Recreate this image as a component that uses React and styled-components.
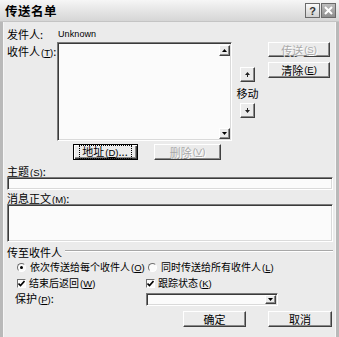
import React from 'react';
import styled, { createGlobalStyle, css } from 'styled-components';

const Global = createGlobalStyle`
  html, body { margin: 0; padding: 0; background: #ebebeb; }
  body {
    font-family: "Noto Sans CJK SC", "Liberation Sans", sans-serif;
    font-size: 11px;
    color: #000;
  }
  #root { width: 339px; height: 337px; }
`;

const raised = css`
  border: 1px solid;
  border-color: #fff #404040 #404040 #fff;
  box-shadow: inset -1px -1px 0 #8a8a8a;
  background: #ebebeb;
`;

const sunken = css`
  border: 1px solid;
  border-color: #7a7a7a #fff #fff #7a7a7a;
  box-shadow: inset 1px 1px 0 #3a3a3a, inset -1px -1px 0 #dadada;
  background: #fbfbfb;
`;

const Window = styled.div`
  width: 339px;
  height: 337px;
  display: flex;
  flex-direction: column;
  overflow: hidden;
  background: #ebebeb;
`;

const TitleBar = styled.div`
  height: 22px;
  flex: none;
  display: flex;
  align-items: center;
  padding: 0 3px 0 5px;
  background: linear-gradient(#f6f6f6, #e2e2e2 60%, #d6d6d6);
  border-bottom: 1px solid #c4c4c4;
  box-sizing: border-box;
`;

const Title = styled.div`
  flex: 1;
  font-weight: bold;
  font-size: 12.5px;
  line-height: 14px;
  letter-spacing: 0.5px;
`;

const CapButton = styled.div`
  width: 15px;
  height: 15px;
  margin-left: 1px;
  box-sizing: border-box;
  display: flex;
  align-items: center;
  justify-content: center;
  font-family: "Liberation Sans", sans-serif;
  font-weight: bold;
  font-size: 11px;
  border: 1px solid #6a6a6a;
  background: ${p => (p.$dark ? 'linear-gradient(#bdbdbd,#8e8e8e)' : 'linear-gradient(#fafafa,#d0d0d0)')};
  color: ${p => (p.$dark ? '#fff' : '#333')};
`;

const Frame = styled.div`
  flex: 1;
  border-left: 3px solid #b9b9b9;
  border-right: 3px solid #b9b9b9;
  box-shadow: inset 1px 0 0 #f6f6f6, inset -1px 0 0 #f6f6f6;
  padding: 6px 3px 0 4px;
  display: flex;
  flex-direction: column;
`;

const Text = styled.div`
  line-height: 12px;
  height: 12px;
  white-space: nowrap;
  color: ${p => (p.$disabled ? '#a8a8a8' : '#000')};
  text-shadow: ${p => (p.$disabled ? '1px 1px 0 #fff' : 'none')};
`;

const SenderRow = styled.div`
  display: grid;
  grid-template-columns: 51px 1fr;
  height: 12px;
  line-height: 12px;
`;

const Latin = styled.span`
  font-family: "Liberation Sans", sans-serif;
  font-size: 9px;
  letter-spacing: 0.1px;
`;

const KeyWrap = styled.span`
  font-family: "Liberation Sans", sans-serif;
  font-size: 9.5px;
  margin-left: 1px;
`;

const MainGrid = styled.div`
  margin-top: 2px;
  display: grid;
  grid-template-columns: 50px 175px 8px 15px 13px 62px;
  height: 99px;
`;

const LabelCell = styled.div`
  padding-top: 3px;
`;

const ListBox = styled.div`
  ${sunken};
  box-sizing: border-box;
  display: flex;
  justify-content: flex-end;
  padding: 2px 1px 1px 2px;
`;

const MiniScroll = styled.div`
  width: 11px;
  display: flex;
  flex-direction: column;
  justify-content: space-between;
`;

const ScrollArrow = styled.div`
  ${raised};
  box-sizing: border-box;
  height: 11px;
  display: flex;
  align-items: center;
  justify-content: center;
`;

const MoveCol = styled.div`
  grid-column: 4;
  display: flex;
  flex-direction: column;
  align-items: center;
  padding-top: 25px;
`;

const SmallBtn = styled.div`
  ${raised};
  box-sizing: border-box;
  width: 15px;
  height: 15px;
  display: flex;
  align-items: center;
  justify-content: center;
`;

const MoveLabel = styled(Text)`
  margin: 5px 0 4px;
  width: 24px;
  text-align: center;
`;

const BtnCol = styled.div`
  grid-column: 6;
  display: flex;
  flex-direction: column;
  gap: 5px;
`;

const Button = styled.div`
  ${raised};
  box-sizing: border-box;
  width: ${p => p.$w || 62}px;
  height: ${p => p.$h || 16}px;
  display: flex;
  align-items: center;
  justify-content: center;
  line-height: 12px;
  white-space: nowrap;
  color: ${p => (p.$disabled ? '#a8a8a8' : '#000')};
  text-shadow: ${p => (p.$disabled ? '1px 1px 0 #fff' : 'none')};
  ${p =>
    p.$focus &&
    css`
      border-color: #000;
      box-shadow: inset 1px 1px 0 #fff, inset -1px -1px 0 #404040, inset -2px -2px 0 #8a8a8a;
    `}
`;

const FocusRing = styled.span`
  border: 1px dotted #000;
  padding: 0 3px 0 2px;
  line-height: 10px;
`;

const AddrRow = styled.div`
  margin-top: 3px;
  padding-left: 66px;
  display: flex;
  gap: 16px;
`;

const FieldLabel = styled(Text)`
  margin-top: ${p => p.$mt || 0}px;
`;

const Input = styled.div`
  ${sunken};
  box-sizing: border-box;
  width: 326px;
  height: ${p => p.$h}px;
  background: #fbfbfb;
`;

const GroupHead = styled.div`
  margin-top: 4px;
  display: flex;
  align-items: center;
  gap: 3px;
  height: 12px;
  line-height: 12px;
  &::after {
    content: '';
    flex: 1;
    border-top: 1px solid #a8a8a8;
    border-bottom: 1px solid #fff;
    margin-top: -2px;
  }
`;

const OptRow = styled.div`
  margin-top: ${p => p.$mt}px;
  display: grid;
  grid-template-columns: 139px 1fr;
  height: ${p => p.$h || 12}px;
  align-items: center;
`;

const Opt = styled.div`
  display: flex;
  align-items: center;
  gap: 3px;
  padding-left: ${p => p.$pl || 0}px;
  line-height: 12px;
  white-space: nowrap;
  font-size: ${p => p.$fs || 10}px;
`;

const Radio = styled.span`
  width: 7px;
  height: 7px;
  border-radius: 50%;
  border: 1px solid;
  border-color: #707070 #fff #fff #707070;
  background: #fbfbfb;
  display: inline-flex;
  align-items: center;
  justify-content: center;
  flex: none;
  margin-right: 1px;
  &::after {
    content: '';
    width: 3px;
    height: 3px;
    border-radius: 50%;
    background: ${p => (p.$on ? '#000' : 'transparent')};
  }
`;

const Check = styled.span`
  width: 9px;
  height: 9px;
  box-sizing: border-box;
  border: 1px solid;
  border-color: #707070 #fff #fff #707070;
  background: #fbfbfb;
  display: inline-flex;
  align-items: center;
  justify-content: center;
  flex: none;
`;

const Select = styled.div`
  ${sunken};
  box-sizing: border-box;
  width: 132px;
  height: 13px;
  display: flex;
  justify-content: flex-end;
  padding: 1px;
`;

const DropBtn = styled.div`
  ${raised};
  box-sizing: border-box;
  width: 11px;
  height: 100%;
  display: flex;
  align-items: center;
  justify-content: center;
`;

const FooterRow = styled.div`
  margin-top: 6px;
  display: flex;
  padding-left: 176px;
  gap: 22px;
`;

const Key = ({ k }) => (
  <KeyWrap>
    (<u>{k}</u>)
  </KeyWrap>
);

const Tri = ({ up }) => (
  <svg width="5" height="3" viewBox="0 0 5 3">
    <path d={up ? 'M2.5 0 L5 3 L0 3 Z' : 'M0 0 L5 0 L2.5 3 Z'} fill="#000" />
  </svg>
);

const Arrow = ({ up }) => (
  <svg width="5" height="5" viewBox="0 0 5 5">
    {up ? (
      <path d="M2.5 0 L5 3 L3 3 L3 5 L2 5 L2 3 L0 3 Z" fill="#222" />
    ) : (
      <path d="M2 0 L3 0 L3 2 L5 2 L2.5 5 L0 2 L2 2 Z" fill="#222" />
    )}
  </svg>
);

const Tick = () => (
  <svg width="7" height="7" viewBox="0 0 7 7">
    <path d="M0.5 3.5 L2.5 5.5 L6.5 1" stroke="#000" strokeWidth="1.6" fill="none" />
  </svg>
);

export default function App() {
  return (
    <>
      <Global />
      <Window>
        <TitleBar>
          <Title>传送名单</Title>
          <CapButton>?</CapButton>
          <CapButton $dark>
            <svg width="9" height="9" viewBox="0 0 9 9">
              <path d="M1 1 L8 8 M8 1 L1 8" stroke="#fff" strokeWidth="2" />
            </svg>
          </CapButton>
        </TitleBar>
        <Frame>
          <SenderRow>
            <span>发件人:</span>
            <Latin>Unknown</Latin>
          </SenderRow>
          <MainGrid>
            <LabelCell>
              <Text>
                收件人<Key k="T" />:
              </Text>
            </LabelCell>
            <ListBox>
              <MiniScroll>
                <ScrollArrow>
                  <Tri up />
                </ScrollArrow>
                <ScrollArrow>
                  <Tri />
                </ScrollArrow>
              </MiniScroll>
            </ListBox>
            <MoveCol>
              <SmallBtn>
                <Arrow up />
              </SmallBtn>
              <MoveLabel>移动</MoveLabel>
              <SmallBtn>
                <Arrow />
              </SmallBtn>
            </MoveCol>
            <BtnCol>
              <Button $disabled $h={15}>
                传送<Key k="S" />
              </Button>
              <Button>
                清除<Key k="E" />
              </Button>
            </BtnCol>
          </MainGrid>
          <AddrRow>
            <Button $focus $w={65}>
              <FocusRing>
                地址<Key k="D" />...
              </FocusRing>
            </Button>
            <Button $disabled $w={67}>
              删除<Key k="V" />
            </Button>
          </AddrRow>
          <FieldLabel $mt={5}>
            主题<Key k="S" />:
          </FieldLabel>
          <Input $h={13} />
          <FieldLabel $mt={2}>
            消息正文<Key k="M" />:
          </FieldLabel>
          <Input $h={38} />
          <GroupHead>传至收件人</GroupHead>
          <OptRow $mt={3}>
            <Opt $pl={10}>
              <Radio $on />
              <span>
                依次传送给每个收件人<Key k="O" />
              </span>
            </Opt>
            <Opt $pl={2}>
              <Radio />
              <span>
                同时传送给所有收件人<Key k="L" />
              </span>
            </Opt>
          </OptRow>
          <OptRow $mt={4}>
            <Opt $pl={10}>
              <Check>
                <Tick />
              </Check>
              <span>
                结束后返回<Key k="W" />
              </span>
            </Opt>
            <Opt>
              <Check>
                <Tick />
              </Check>
              <span>
                跟踪状态<Key k="K" />
              </span>
            </Opt>
          </OptRow>
          <OptRow $mt={3} $h={13}>
            <Opt $pl={8} $fs={11}>
              <span>
                保护<Key k="P" />:
              </span>
            </Opt>
            <Select>
              <DropBtn>
                <Tri />
              </DropBtn>
            </Select>
          </OptRow>
          <FooterRow>
            <Button $w={63}>确定</Button>
            <Button $w={64}>取消</Button>
          </FooterRow>
        </Frame>
      </Window>
    </>
  );
}
